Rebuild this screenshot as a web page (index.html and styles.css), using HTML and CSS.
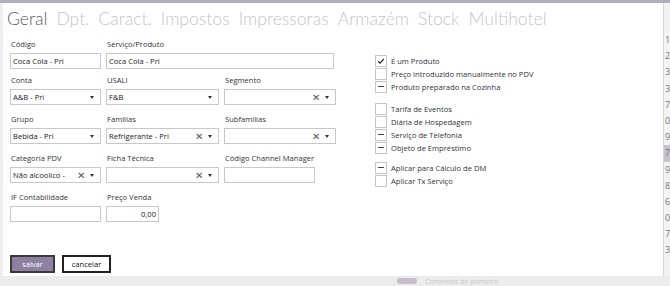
FILE: index.html
```html
<!DOCTYPE html>
<html lang="pt">
<head>
<meta charset="utf-8">
<link rel="stylesheet" href="styles.css">
</head>
<body>
<div class="topbar"></div>
<div class="main">
  <div class="modal">
    <nav class="tabs">
      <span class="tab active">Geral</span>
      <span class="tab">Dpt.</span>
      <span class="tab">Caract.</span>
      <span class="tab">Impostos</span>
      <span class="tab">Impressoras</span>
      <span class="tab">Armazém</span>
      <span class="tab">Stock</span>
      <span class="tab">Multihotel</span>
    </nav>
    <div class="content">
      <div class="form">
        <div class="row row-first">
          <div class="field w1"><label>Código</label><div class="input">Coca Cola - Pri</div></div>
          <div class="field w23"><label>Serviço/Produto</label><div class="input">Coca Cola - Pri</div></div>
        </div>
        <div class="row">
          <div class="field w1"><label>Conta</label><div class="input select"><span class="val">A&amp;B - Pri</span><span class="caret"></span></div></div>
          <div class="field w2"><label>USALI</label><div class="input select"><span class="val">F&amp;B</span><span class="caret"></span></div></div>
          <div class="field w3"><label>Segmento</label><div class="input select"><span class="val"></span><span class="clear">✕</span><span class="caret"></span></div></div>
        </div>
        <div class="row">
          <div class="field w1"><label>Grupo</label><div class="input select"><span class="val">Bebida - Pri</span><span class="caret"></span></div></div>
          <div class="field w2"><label>Familias</label><div class="input select"><span class="val">Refrigerante - Pri</span><span class="clear">✕</span><span class="caret"></span></div></div>
          <div class="field w3"><label>Subfamilias</label><div class="input select"><span class="val"></span><span class="clear">✕</span><span class="caret"></span></div></div>
        </div>
        <div class="row">
          <div class="field w1"><label>Categoria PDV</label><div class="input select"><span class="val">Não alcoolico -</span><span class="clear">✕</span><span class="caret"></span></div></div>
          <div class="field w2"><label>Ficha Técnica</label><div class="input select"><span class="val"></span><span class="clear">✕</span><span class="caret"></span></div></div>
          <div class="field w1"><label>Código Channel Manager</label><div class="input"></div></div>
        </div>
        <div class="row">
          <div class="field w1"><label>IF Contabilidade</label><div class="input"></div></div>
          <div class="field wp"><label>Preço Venda</label><div class="input num">0,00</div></div>
        </div>
      </div>
      <div class="checks">
        <div class="group">
          <div class="check"><span class="box checked"><svg viewBox="0 0 12 12" width="12" height="12"><path d="M2.6 6.3 L4.9 8.6 L9.4 3.4" fill="none" stroke="#222" stroke-width="1.5"/></svg></span>É um Produto</div>
          <div class="check"><span class="box"></span>Preço introduzido manualmente no PDV</div>
          <div class="check"><span class="box dash"></span>Produto preparado na Cozinha</div>
        </div>
        <div class="group">
          <div class="check"><span class="box"></span>Tarifa de Eventos</div>
          <div class="check"><span class="box"></span>Diária de Hospedagem</div>
          <div class="check"><span class="box dash"></span>Serviço de Telefonia</div>
          <div class="check"><span class="box dash"></span>Objeto de Empréstimo</div>
        </div>
        <div class="group">
          <div class="check"><span class="box dash"></span>Aplicar para Cálculo de DM</div>
          <div class="check"><span class="box"></span>Aplicar Tx Serviço</div>
        </div>
      </div>
    </div>
    <div class="actions">
      <button class="btn primary">salvar</button>
      <button class="btn">cancelar</button>
    </div>
  </div>
  <div class="side">
    <span>1</span><span>2</span><span>3</span><span>3</span><span>7</span><span>0</span><span>9</span><span class="hl">7</span><span>9</span><span>8</span><span>6</span><span>0</span><span>7</span><span>3</span>
  </div>
</div>
<div class="bottombar">
  <span class="pill"></span><span class="faint">Comentes de primeiro</span>
</div>
</body>
</html>
```
FILE: styles.css
```css
* { box-sizing: border-box; }
html, body { margin: 0; padding: 0; }
body {
  width: 670px;
  height: 286px;
  overflow: hidden;
  background: #efefef;
  font-family: "Open Sans", "Noto Sans", sans-serif;
  font-size: 7.6px;
  color: #333;
  display: flex;
  flex-direction: column;
}
.topbar { height: 3px; background: #b3aeb9; flex: none; }
.main { display: flex; height: 273px; flex: none; }
.modal {
  margin-left: 3px;
  width: 660px;
  height: 273px;
  background: #fff;
  display: flex;
  flex-direction: column;
  padding: 4px 0 3px 4px;
}
.tabs { display: flex; gap: 9px; height: 31px; align-items: flex-start; }
.tab {
  font-family: "Lato", "Open Sans", sans-serif;
  font-size: 17.6px;
  font-weight: 300;
  line-height: 24px;
  color: #c6c6c6;
}
.tab.active { color: #5c5c5c; }
.content { display: flex; }
.form { width: 330px; padding-left: 3px; }
.row { display: flex; gap: 5px; margin-bottom: 8px; }
.row-first { margin-bottom: 5px; }
.field { display: flex; flex-direction: column; }
.field label { height: 13px; line-height: 13px; padding-left: 1px; margin-bottom: 2px; color: #333; white-space: nowrap; }
.w1 { width: 91px; }
.w2 { width: 113px; }
.w3 { width: 112px; }
.w23 { width: 228px; }
.wp { width: 53px; }
.input {
  height: 16px;
  border: 1px solid #c8c8c8;
  line-height: 14px;
  padding: 0 2px;
  color: #222;
  display: flex;
  align-items: center;
  white-space: nowrap;
  overflow: hidden;
}
.input.num { justify-content: flex-end; }
.select .val { flex: 1; overflow: hidden; }
.clear { font-size: 10px; color: #555; margin-right: 5px; line-height: 14px; }
.caret {
  width: 0; height: 0;
  border-left: 2.5px solid transparent;
  border-right: 2.5px solid transparent;
  border-top: 3px solid #333;
  margin-right: 4px;
}
.checks { margin-left: 38px; margin-top: 16px; }
.group { margin-bottom: 9px; }
.group + .group + .group { margin-top: -2px; }
.check { display: flex; align-items: center; height: 13px; color: #333; white-space: nowrap; }
.box {
  width: 12px; height: 12px;
  border: 1px solid #c4c4c4;
  margin-right: 4px;
  display: flex; align-items: center; justify-content: center;
  flex: none;
}
.box.dash::after { content: ""; width: 6px; height: 1.5px; background: #444; }
.box svg { display: block; }
.actions { margin-top: auto; display: flex; gap: 7px; padding-left: 3px; }
.btn {
  height: 18px;
  font-family: "Open Sans", sans-serif;
  font-size: 7.6px;
  padding: 0;
  border: 2px solid #222;
  background: #fff;
  color: #111;
  width: 49px;
}
.btn.primary { width: 45px; background: #8e80a1; color: #fff; border-color: #3b3b3b; }
.side {
  flex: 1;
  background: #f3f3f3;
  border-left: 1px solid #d6d6d6;
  display: flex; flex-direction: column;
  padding-top: 29px;
  overflow: hidden;
}
.side span { height: 16.2px; line-height: 16px; font-size: 9px; color: #777; padding-left: 1px; }
.side span.hl { background: #c7c0d1; }
.bottombar { flex: 1; background: #ececec; display: flex; align-items: center; padding-left: 397px; gap: 8px; }
.pill { width: 20px; height: 6px; border-radius: 3px; background: #c5c0cb; }
.faint { font-size: 7px; color: #c8c8c8; }
```
